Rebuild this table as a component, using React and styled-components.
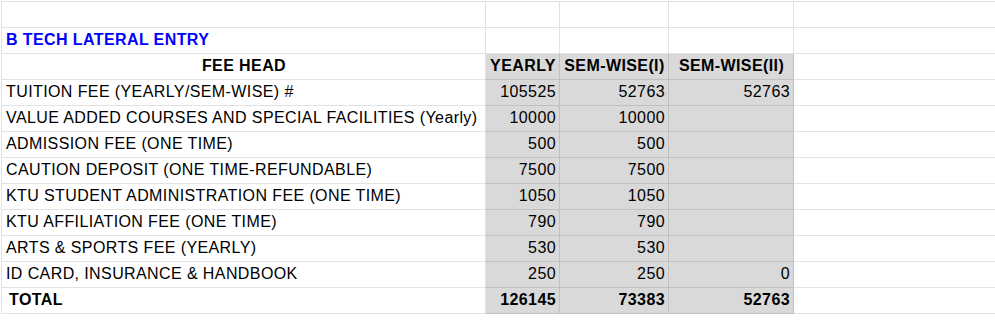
import React from 'react';
import styled, { createGlobalStyle } from 'styled-components';

const GlobalStyle = createGlobalStyle`
  html, body {
    margin: 0;
    padding: 0;
    background: #ffffff;
    overflow: hidden;
  }
  body {
    font-family: 'Liberation Sans', Arial, sans-serif;
  }
`;

const Page = styled.div`
  padding: 1px 0 0 1px;
  width: 995px;
  height: 324px;
  box-sizing: border-box;
  overflow: hidden;
`;

const Sheet = styled.table`
  border-collapse: collapse;
  table-layout: fixed;
  width: 1010px;
  font-size: 16px;
  letter-spacing: 0.4px;
  color: #000000;
`;

const Cell = styled.td`
  height: 24px;
  padding: 0 3px 1px 4px;
  box-sizing: content-box;
  border: 1px solid ${(p) => (p.$shade ? '#c0c0c0' : '#e2e2e2')};
  background: ${(p) => (p.$shade ? '#d9d9d9' : '#ffffff')};
  text-align: ${(p) => p.$align || 'left'};
  font-weight: ${(p) => (p.$bold ? 700 : 400)};
  color: ${(p) => p.$color || '#000000'};
  white-space: nowrap;
  overflow: hidden;
  vertical-align: middle;
  line-height: 18px;
`;

const TotalLabel = styled(Cell)`
  padding-left: 7px;
`;

const fees = [
  ['TUITION FEE (YEARLY/SEM-WISE) #', '105525', '52763', '52763'],
  ['VALUE ADDED COURSES AND SPECIAL FACILITIES (Yearly)', '10000', '10000', ''],
  ['ADMISSION FEE (ONE TIME)', '500', '500', ''],
  ['CAUTION DEPOSIT (ONE TIME-REFUNDABLE)', '7500', '7500', ''],
  ['KTU STUDENT ADMINISTRATION FEE (ONE TIME)', '1050', '1050', ''],
  ['KTU AFFILIATION FEE (ONE TIME)', '790', '790', ''],
  ['ARTS & SPORTS FEE (YEARLY)', '530', '530', ''],
  ['ID CARD, INSURANCE & HANDBOOK', '250', '250', '0'],
];

const totals = ['126145', '73383', '52763'];

export default function App() {
  return (
    <Page>
      <GlobalStyle />
      <Sheet>
        <colgroup>
          <col style={{ width: 484 }} />
          <col style={{ width: 74 }} />
          <col style={{ width: 109 }} />
          <col style={{ width: 125 }} />
          <col />
        </colgroup>
        <tbody>
          <tr>
            <Cell />
            <Cell />
            <Cell />
            <Cell />
            <Cell />
          </tr>
          <tr>
            <Cell $bold $color="#0000ff">B TECH LATERAL ENTRY</Cell>
            <Cell />
            <Cell />
            <Cell />
            <Cell />
          </tr>
          <tr>
            <Cell $bold $align="center">FEE HEAD</Cell>
            <Cell $bold $shade $align="center">YEARLY</Cell>
            <Cell $bold $shade $align="center">SEM-WISE(I)</Cell>
            <Cell $bold $shade $align="center">SEM-WISE(II)</Cell>
            <Cell />
          </tr>
          {fees.map((row) => (
            <tr key={row[0]}>
              <Cell>{row[0]}</Cell>
              <Cell $shade $align="right">{row[1]}</Cell>
              <Cell $shade $align="right">{row[2]}</Cell>
              <Cell $shade $align="right">{row[3]}</Cell>
              <Cell />
            </tr>
          ))}
          <tr>
            <TotalLabel $bold>TOTAL</TotalLabel>
            {totals.map((t) => (
              <Cell key={t + 'total'} $bold $shade $align="right">{t}</Cell>
            ))}
            <Cell />
          </tr>
        </tbody>
      </Sheet>
    </Page>
  );
}
